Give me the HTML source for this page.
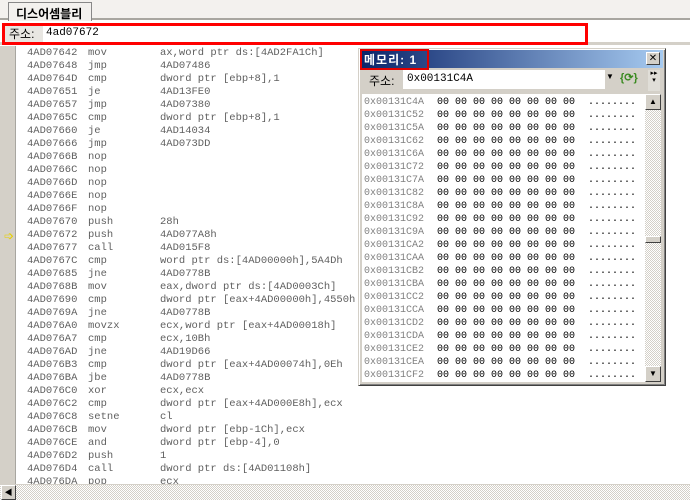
<!DOCTYPE html>
<html><head><meta charset="utf-8"><style>
*{margin:0;padding:0;box-sizing:border-box}
body{width:690px;height:500px;overflow:hidden;background:#fff;position:relative;font-family:"Liberation Sans","Noto Sans CJK KR",sans-serif;font-size:12px}
.abs{position:absolute}
.mono{font-family:"Liberation Mono","Noto Sans CJK KR",monospace;font-size:10.5px;white-space:pre;line-height:13px}
.m10{font-size:10px}
</style></head><body>
<div class="abs" style="left:0;top:0;width:690px;height:20px;background:#f3f1ee;border-bottom:2px solid #a8a6a0"></div>
<div class="abs" style="left:8px;top:2px;width:84px;height:19px;background:#f3f1ee;border:1px solid #888;border-bottom:none;font-weight:bold;font-size:12px;padding:2px 0 0 7px">디스어셈블리</div>
<div class="abs" style="left:0;top:21px;width:690px;height:24px;background:#fff;border-bottom:3px solid #d4d0c8"></div>
<div class="abs" style="left:2px;top:23px;width:586px;height:22px;border:3px solid #f00;background:#fff"></div>
<div class="abs" style="left:5px;top:26px;width:38px;height:16px;background:#e8e6e2;font-size:12px;padding:0 0 0 4px;line-height:16px">주소:</div>
<div class="abs mono" style="left:46px;top:27px;font-size:11px;color:#000">4ad07672</div>
<div class="abs" style="left:0;top:46px;width:16px;height:438px;background:#d4d0c8;border-right:1px solid #a8a6a0"></div>
<div class="abs" style="left:4px;top:230px;color:#e8d000;font-size:12px;line-height:12px">➩</div>
<div class="abs mono" style="left:27px;top:47px;color:#606060">4AD07642
4AD07648
4AD0764D
4AD07651
4AD07657
4AD0765C
4AD07660
4AD07666
4AD0766B
4AD0766C
4AD0766D
4AD0766E
4AD0766F
4AD07670
4AD07672
4AD07677
4AD0767C
4AD07685
4AD0768B
4AD07690
4AD0769A
4AD076A0
4AD076A7
4AD076AD
4AD076B3
4AD076BA
4AD076C0
4AD076C2
4AD076C8
4AD076CB
4AD076CE
4AD076D2
4AD076D4
4AD076DA</div>
<div class="abs mono" style="left:88px;top:47px;color:#606060">mov
jmp
cmp
je
jmp
cmp
je
jmp
nop
nop
nop
nop
nop
push
push
call
cmp
jne
mov
cmp
jne
movzx
cmp
jne
cmp
jbe
xor
cmp
setne
mov
and
push
call
pop</div>
<div class="abs mono" style="left:160px;top:47px;color:#606060">ax,word ptr ds:[4AD2FA1Ch]
4AD07486
dword ptr [ebp+8],1
4AD13FE0
4AD07380
dword ptr [ebp+8],1
4AD14034
4AD073DD





28h
4AD077A8h
4AD015F8
word ptr ds:[4AD00000h],5A4Dh
4AD0778B
eax,dword ptr ds:[4AD0003Ch]
dword ptr [eax+4AD00000h],4550h
4AD0778B
ecx,word ptr [eax+4AD00018h]
ecx,10Bh
4AD19D66
dword ptr [eax+4AD00074h],0Eh
4AD0778B
ecx,ecx
dword ptr [eax+4AD000E8h],ecx
cl
dword ptr [ebp-1Ch],ecx
dword ptr [ebp-4],0
1
dword ptr ds:[4AD01108h]
ecx</div>
<div class="abs" style="left:0;top:484px;width:690px;height:16px;background:repeating-conic-gradient(#d4d0c8 0 25%,#fff 0 50%) 0 0/2px 2px;border-top:1px solid #d4d0c8"></div>
<div class="abs" style="left:1px;top:485px;width:15px;height:15px;background:#d4d0c8;border:1px solid;border-color:#fff #404040 #404040 #fff;font-size:8px;text-align:center;line-height:13px">◀</div>
<!-- memory window -->
<div class="abs" style="left:358px;top:48px;width:308px;height:338px;background:#d4d0c8;border:1px solid;border-color:#d4d0c8 #404040 #404040 #d4d0c8;box-shadow:inset 1px 1px #fff,inset -1px -1px #808080"></div>
<div class="abs" style="left:361px;top:50px;width:302px;height:18px;background:linear-gradient(90deg,#0a246a,#a6caf0)"></div>
<div class="abs" style="left:360px;top:49px;width:69px;height:21px;border:2px solid #e00000"></div>
<div class="abs" style="left:364px;top:51px;color:#fff;font-weight:bold;font-size:12px;letter-spacing:1px">메모리: 1</div>
<div class="abs" style="left:646px;top:52px;width:14px;height:13px;background:#d4d0c8;border:1px solid;border-color:#fff #404040 #404040 #fff;font-size:10px;line-height:11px;text-align:center">✕</div>
<div class="abs" style="left:369px;top:72px;font-size:12px">주소:</div>
<div class="abs mono" style="left:403px;top:70px;width:202px;height:19px;background:#fff;padding:3px 0 0 4px;font-size:11px">0x00131C4A</div>
<div class="abs" style="left:606px;top:72px;font-size:8px">▼</div>
<div class="abs" style="left:620px;top:71px;color:#3a8a20;font-size:11px;font-weight:bold">{⟳}</div>
<div class="abs" style="left:648px;top:70px;width:12px;height:21px;font-size:7px;line-height:7px;text-align:center;background:#e0ded8">▸▸<br>▾</div>
<div class="abs" style="left:362px;top:94px;width:283px;height:288px;background:#fff"></div>
<div class="abs mono m10" style="left:364px;top:96px;color:#808080">0x00131C4A
0x00131C52
0x00131C5A
0x00131C62
0x00131C6A
0x00131C72
0x00131C7A
0x00131C82
0x00131C8A
0x00131C92
0x00131C9A
0x00131CA2
0x00131CAA
0x00131CB2
0x00131CBA
0x00131CC2
0x00131CCA
0x00131CD2
0x00131CDA
0x00131CE2
0x00131CEA
0x00131CF2</div>
<div class="abs mono m10" style="left:437px;top:96px;color:#000">00 00 00 00 00 00 00 00
00 00 00 00 00 00 00 00
00 00 00 00 00 00 00 00
00 00 00 00 00 00 00 00
00 00 00 00 00 00 00 00
00 00 00 00 00 00 00 00
00 00 00 00 00 00 00 00
00 00 00 00 00 00 00 00
00 00 00 00 00 00 00 00
00 00 00 00 00 00 00 00
00 00 00 00 00 00 00 00
00 00 00 00 00 00 00 00
00 00 00 00 00 00 00 00
00 00 00 00 00 00 00 00
00 00 00 00 00 00 00 00
00 00 00 00 00 00 00 00
00 00 00 00 00 00 00 00
00 00 00 00 00 00 00 00
00 00 00 00 00 00 00 00
00 00 00 00 00 00 00 00
00 00 00 00 00 00 00 00
00 00 00 00 00 00 00 00</div>
<div class="abs mono m10" style="left:588px;top:96px;color:#000">........
........
........
........
........
........
........
........
........
........
........
........
........
........
........
........
........
........
........
........
........
........</div>
<div class="abs" style="left:645px;top:94px;width:16px;height:288px;background:repeating-conic-gradient(#d4d0c8 0 25%,#fff 0 50%) 0 0/2px 2px"></div>
<div class="abs" style="left:645px;top:94px;width:16px;height:16px;background:#d4d0c8;border:1px solid;border-color:#fff #404040 #404040 #fff;font-size:8px;text-align:center;line-height:13px">▲</div>
<div class="abs" style="left:645px;top:236px;width:16px;height:7px;background:#d4d0c8;border:1px solid;border-color:#fff #404040 #404040 #fff"></div>
<div class="abs" style="left:645px;top:366px;width:16px;height:16px;background:#d4d0c8;border:1px solid;border-color:#fff #404040 #404040 #fff;font-size:8px;text-align:center;line-height:13px">▼</div>
</body></html>
